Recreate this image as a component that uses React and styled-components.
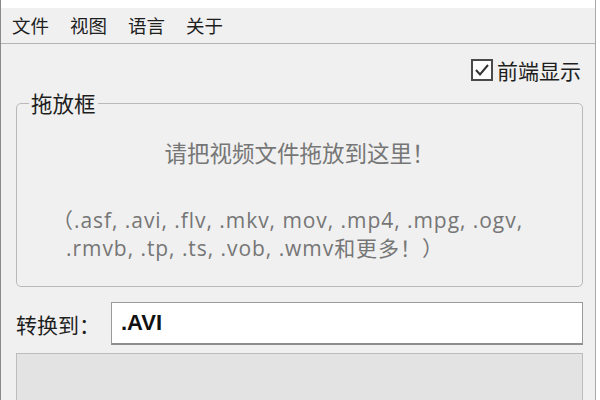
import React from "react";
import styled, { createGlobalStyle } from "styled-components";

const Global = createGlobalStyle`
  html, body { margin: 0; padding: 0; background: #ffffff; }
  body { font-family: "Noto Sans CJK SC", "Noto Sans", sans-serif; }
`;

const Window = styled.div`
  width: 596px;
  height: 400px;
  box-sizing: border-box;
  background: #f0f0f0;
  border-left: 1px solid #8a8a8a;
  border-right: 1px solid #a8a8a8;
  display: flex;
  flex-direction: column;
  overflow: hidden;
`;

const TitleStrip = styled.div`
  height: 8px;
  background: #ffffff;
  flex: none;
`;

const MenuBar = styled.div`
  height: 35px;
  flex: none;
  display: flex;
  align-items: center;
  gap: 21px;
  padding-left: 11px;
  border-bottom: 1px solid #b4b4b4;
  background: #f0f0f0;
`;

const MenuItem = styled.span`
  font-size: 18.5px;
  color: #1e1e1e;
  line-height: 1;
`;

const Body = styled.div`
  flex: 1;
  display: flex;
  flex-direction: column;
  padding: 0 12px 0 15px;
`;

const CheckRow = styled.label`
  display: flex;
  justify-content: flex-end;
  align-items: center;
  gap: 4px;
  margin-top: 15px;
  height: 22px;
  padding-right: 2px;
  font-size: 21px;
  color: #1e1e1e;
`;

const Fieldset = styled.fieldset`
  margin: 11px 0 0 0;
  padding: 26px 0 0 0;
  height: 195px;
  box-sizing: border-box;
  border: 1px solid #b9b9b9;
  border-radius: 5px;
`;

const Legend = styled.legend`
  margin-left: 12px;
  padding: 0 2px;
  font-size: 21.5px;
  line-height: 22px;
  color: #1e1e1e;
`;

const DropHint = styled.div`
  text-align: center;
  font-size: 22.5px;
  line-height: 24px;
  color: #767676;
`;

const Formats = styled.div`
  width: 475px;
  margin: 42px 0 0 49px;
  text-indent: -14px;
  font-family: "Open Sans", "Noto Sans CJK SC", sans-serif;
  font-size: 21px;
  letter-spacing: 0.95px;
  line-height: 28px;
  color: #767676;
`;

const ConvertRow = styled.div`
  display: flex;
  align-items: center;
  margin-top: 15px;
  height: 43px;
`;

const ConvertLabel = styled.span`
  width: 95px;
  font-size: 21px;
  color: #1e1e1e;
`;

const FormatInput = styled.div`
  flex: 1;
  height: 43px;
  box-sizing: border-box;
  background: #ffffff;
  border: 1px solid #9a9a9a;
  border-bottom: 2px solid #8e8e8e;
  display: flex;
  align-items: center;
  padding-left: 9px;
  font-family: "Liberation Sans", Arial, sans-serif;
  font-weight: bold;
  font-size: 22px;
  color: #111111;
`;

const Progress = styled.div`
  margin-top: 8px;
  height: 50px;
  box-sizing: border-box;
  background: #e3e3e3;
  border: 1px solid #bdbdbd;
`;

function CheckBox() {
  return (
    <svg width="22" height="22" viewBox="0 0 22 22">
      <rect x="1" y="1" width="20" height="20" fill="#ffffff" stroke="#4a4a4a" strokeWidth="2" />
      <polyline points="5,11 9,15.5 17,6" fill="none" stroke="#333333" strokeWidth="2" />
    </svg>
  );
}

export default function App() {
  return (
    <>
      <Global />
      <Window>
        <TitleStrip />
        <MenuBar>
          <MenuItem>文件</MenuItem>
          <MenuItem>视图</MenuItem>
          <MenuItem>语言</MenuItem>
          <MenuItem>关于</MenuItem>
        </MenuBar>
        <Body>
          <CheckRow>
            <CheckBox />
            <span>前端显示</span>
          </CheckRow>
          <Fieldset>
            <Legend>拖放框</Legend>
            <DropHint>请把视频文件拖放到这里！</DropHint>
            <Formats>（.asf, .avi, .flv, .mkv, mov, .mp4, .mpg, .ogv, .rmvb, .tp, .ts, .vob, .wmv和更多！）</Formats>
          </Fieldset>
          <ConvertRow>
            <ConvertLabel>转换到：</ConvertLabel>
            <FormatInput>.AVI</FormatInput>
          </ConvertRow>
          <Progress />
        </Body>
      </Window>
    </>
  );
}
